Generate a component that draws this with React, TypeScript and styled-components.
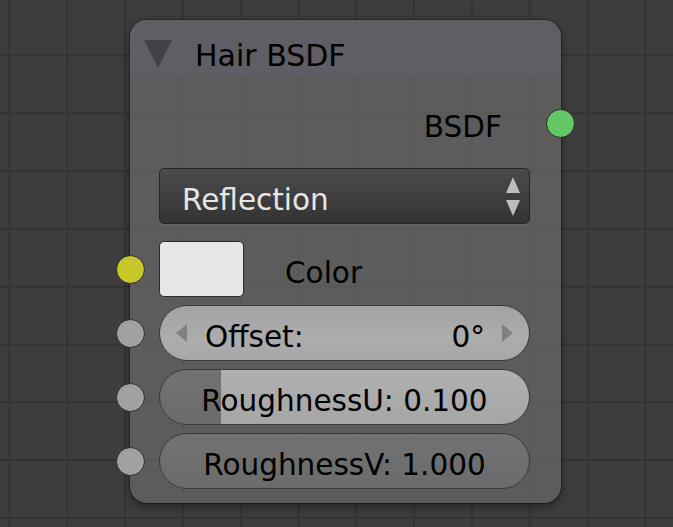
import React from "react";
import styled, { createGlobalStyle } from "styled-components";

const Global = createGlobalStyle`
  html, body { margin: 0; padding: 0; }
  body {
    width: 673px;
    height: 527px;
    overflow: hidden;
    background-color: #3d3d3d;
    background-image:
      linear-gradient(to right, #333333 0, #333333 1.5px, transparent 1.5px),
      linear-gradient(to bottom, #333333 0, #333333 1.5px, transparent 1.5px);
    background-size: 57.8px 57.8px;
    background-position: 8.5px 54.5px;
    font-family: "DejaVu Sans", "Liberation Sans", sans-serif;
  }
`;

const Canvas = styled.div`
  padding: 20px 0 0 130px;
`;

const Node = styled.div`
  width: 431px;
  border-radius: 17px;
  background: rgba(104, 104, 104, 0.72);
  box-shadow: 0 3px 10px rgba(0, 0, 0, 0.45), 0 0 0 1px rgba(30, 30, 30, 0.5);
  display: flex;
  flex-direction: column;
  color: #000;
`;

const Header = styled.div`
  height: 58px;
  border-radius: 17px 17px 0 0;
  background: rgba(98, 96, 106, 0.72);
  display: flex;
  align-items: center;
  padding-left: 14px;
  gap: 23px;
`;

const Triangle = styled.div`
  width: 0;
  height: 0;
  border-left: 14.5px solid transparent;
  border-right: 14.5px solid transparent;
  border-top: 28px solid #424146;
  margin-top: 10px;
`;

const Title = styled.span`
  font-size: 30px;
  line-height: 1;
  padding-top: 13px;
`;

const Body = styled.div`
  display: flex;
  flex-direction: column;
  padding: 17px 31px 14px 29px;
`;

const Row = styled.div<{ $gap?: number }>`
  position: relative;
  height: 56px;
  display: flex;
  align-items: center;
  margin-top: ${(p) => p.$gap ?? 0}px;
`;

const OutputRow = styled(Row)`
  justify-content: flex-end;
  padding-right: 28px;
`;

const Label = styled.span`
  font-size: 29.5px;
  line-height: 1;
  padding-top: 10px;
`;

const Socket = styled.div<{ $color: string; $side: "left" | "right" }>`
  position: absolute;
  top: 50%;
  ${(p) => (p.$side === "left" ? "left: -43px;" : "right: -45px;")}
  width: 27px;
  height: 27px;
  margin-top: -14px;
  border-radius: 50%;
  background: ${(p) => p.$color};
  border: 1px solid #2a2a2a;
`;

const Dropdown = styled.div`
  flex: 1;
  height: 100%;
  box-sizing: border-box;
  border-radius: 5px;
  border: 1px solid #262626;
  background: linear-gradient(to bottom, #4b4b4b, #333333);
  display: flex;
  align-items: center;
  justify-content: space-between;
  padding: 0 9px 0 22px;
  color: #e6e6e6;
  box-shadow: 0 1px 0 rgba(255, 255, 255, 0.05);
`;

const DropText = styled.span`
  font-size: 29.5px;
  line-height: 1;
  padding-top: 10px;
`;

const Arrows = styled.div`
  display: flex;
  flex-direction: column;
  gap: 7px;
`;

const Arrow = styled.div<{ $dir: "up" | "down" | "left" | "right"; $color: string }>`
  width: 0;
  height: 0;
  ${(p) =>
    p.$dir === "up"
      ? `border-left: 7.5px solid transparent; border-right: 7.5px solid transparent; border-bottom: 16px solid ${p.$color};`
      : p.$dir === "down"
      ? `border-left: 7.5px solid transparent; border-right: 7.5px solid transparent; border-top: 16px solid ${p.$color};`
      : p.$dir === "left"
      ? `border-top: 9.5px solid transparent; border-bottom: 9.5px solid transparent; border-right: 11px solid ${p.$color};`
      : `border-top: 9.5px solid transparent; border-bottom: 9.5px solid transparent; border-left: 11px solid ${p.$color};`}
`;

const Swatch = styled.div`
  width: 85px;
  height: 100%;
  box-sizing: border-box;
  border-radius: 5px;
  border: 1px solid #2b2b2b;
  background: #e6e6e6;
  margin-right: 41px;
`;

const Slider = styled.div<{ $fill: number }>`
  flex: 1;
  height: 100%;
  box-sizing: border-box;
  border-radius: 28px;
  border: 1px solid #3a3a3a;
  background:
    linear-gradient(to bottom, rgba(255,255,255,0.0), rgba(0,0,0,0.06)),
    linear-gradient(
      to right,
      #727272 0,
      #727272 ${(p) => p.$fill}px,
      #b0b0b0 ${(p) => p.$fill}px,
      #b0b0b0 100%
    );
  display: flex;
  align-items: center;
  justify-content: center;
  font-size: 29.5px;
  line-height: 1;
`;

const SliderText = styled.span`
  padding-top: 9px;
`;

const NumField = styled.div`
  flex: 1;
  height: 100%;
  box-sizing: border-box;
  border-radius: 28px;
  border: 1px solid #3a3a3a;
  background: linear-gradient(to bottom, #a3a3a3, #acacac 60%, #a8a8a8);
  display: flex;
  align-items: center;
  padding: 0 16px 0 16px;
  gap: 18px;
  font-size: 29.5px;
  line-height: 1;
`;

const NumLabel = styled.span`
  flex: 1;
  padding-top: 9px;
`;

const NumValue = styled.span`
  padding-top: 9px;
  margin-right: -1px;
`;

export default function App() {
  return (
    <>
      <Global />
      <Canvas>
        <Node>
          <Header>
            <Triangle />
            <Title>Hair BSDF</Title>
          </Header>
          <Body>
            <OutputRow>
              <Label>BSDF</Label>
              <Socket $side="right" $color="#63c763" />
            </OutputRow>
            <Row $gap={17}>
              <Dropdown>
                <DropText>Reflection</DropText>
                <Arrows>
                  <Arrow $dir="up" $color="#bdbdbd" />
                  <Arrow $dir="down" $color="#bdbdbd" />
                </Arrows>
              </Dropdown>
            </Row>
            <Row $gap={17}>
              <Socket $side="left" $color="#c7c729" />
              <Swatch />
              <Label>Color</Label>
            </Row>
            <Row $gap={8}>
              <Socket $side="left" $color="#a1a1a1" />
              <NumField>
                <Arrow $dir="left" $color="#808080" />
                <NumLabel>Offset:</NumLabel>
                <NumValue>0°</NumValue>
                <Arrow $dir="right" $color="#808080" />
              </NumField>
            </Row>
            <Row $gap={8}>
              <Socket $side="left" $color="#a1a1a1" />
              <Slider $fill={61}>
                <SliderText>RoughnessU: 0.100</SliderText>
              </Slider>
            </Row>
            <Row $gap={8}>
              <Socket $side="left" $color="#a1a1a1" />
              <Slider $fill={400}>
                <SliderText>RoughnessV: 1.000</SliderText>
              </Slider>
            </Row>
          </Body>
        </Node>
      </Canvas>
    </>
  );
}
